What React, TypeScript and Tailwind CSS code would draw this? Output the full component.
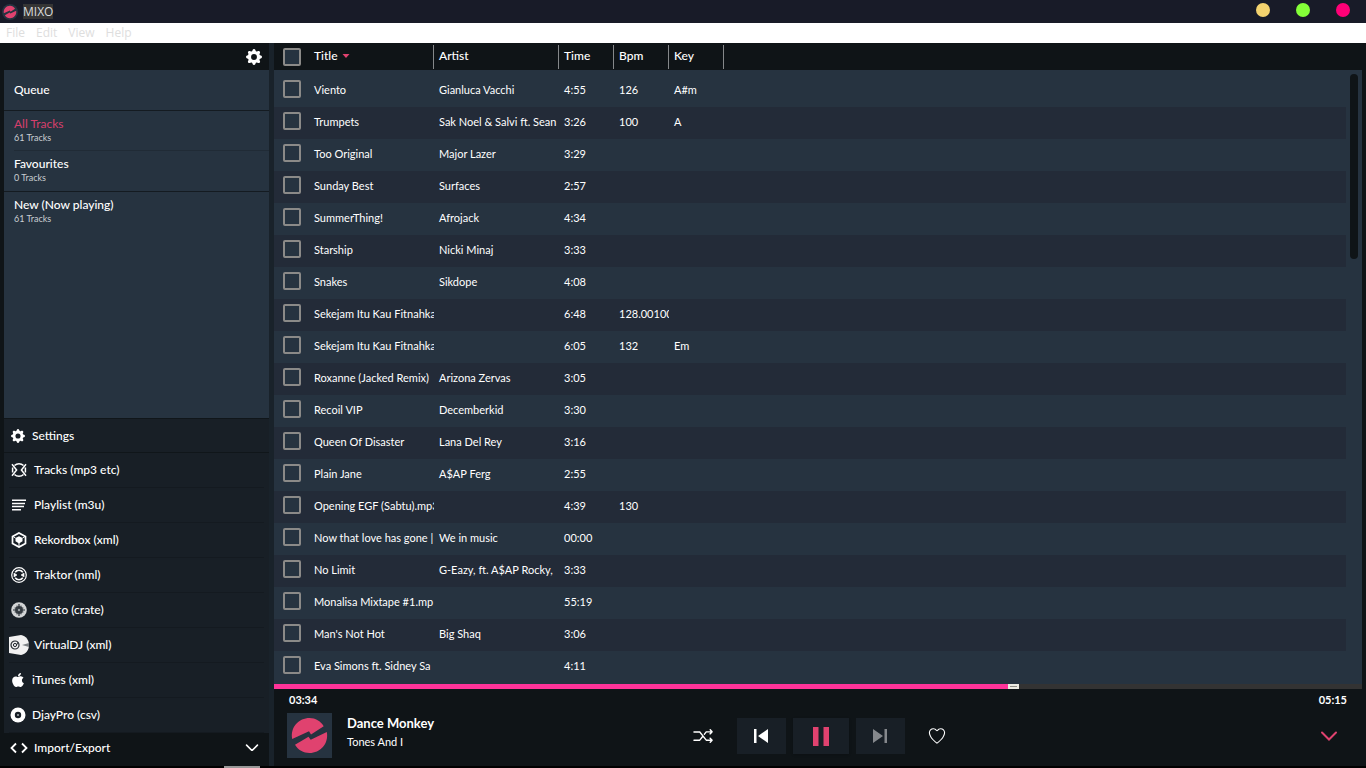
import * as React from "react";
import { BsGearFill } from "react-icons/bs";
import { FaApple } from "react-icons/fa";
import { IoIosHeartEmpty, IoIosShuffle } from "react-icons/io";

type Track = {
  title: string;
  artist?: string;
  time: string;
  bpm?: string;
  musicalKey?: string;
};

const tracks: Track[] = [
  { title: "Viento", artist: "Gianluca Vacchi", time: "4:55", bpm: "126", musicalKey: "A#m" },
  { title: "Trumpets", artist: "Sak Noel & Salvi ft. Sean", time: "3:26", bpm: "100", musicalKey: "A" },
  { title: "Too Original", artist: "Major Lazer", time: "3:29" },
  { title: "Sunday Best", artist: "Surfaces", time: "2:57" },
  { title: "SummerThing!", artist: "Afrojack", time: "4:34" },
  { title: "Starship", artist: "Nicki Minaj", time: "3:33" },
  { title: "Snakes", artist: "Sikdope", time: "4:08" },
  { title: "Sekejam Itu Kau Fitnahka", time: "6:48", bpm: "128.00100" },
  { title: "Sekejam Itu Kau Fitnahka", time: "6:05", bpm: "132", musicalKey: "Em" },
  { title: "Roxanne (Jacked Remix)", artist: "Arizona Zervas", time: "3:05" },
  { title: "Recoil VIP", artist: "Decemberkid", time: "3:30" },
  { title: "Queen Of Disaster", artist: "Lana Del Rey", time: "3:16" },
  { title: "Plain Jane", artist: "A$AP Ferg", time: "2:55" },
  { title: "Opening EGF (Sabtu).mp3", time: "4:39", bpm: "130" },
  { title: "Now that love has gone |", artist: "We in music", time: "00:00" },
  { title: "No Limit", artist: "G-Eazy, ft. A$AP Rocky,", time: "3:33" },
  { title: "Monalisa Mixtape #1.mp", time: "55:19" },
  { title: "Man's Not Hot", artist: "Big Shaq", time: "3:06" },
  { title: "Eva Simons ft. Sidney Sa", time: "4:11" },
];

const checkboxClass =
  "block size-[18px] appearance-none rounded-[2px] border-2 border-[#8b8a88] bg-[#263340] checked:bg-[#e0426f]";

function Logo({ className }: { className?: string }) {
  return (
    <svg viewBox="0 0 45 45" className={className} aria-hidden="true">
      <path d="M5.200 26C3 14 12 5 22.500 5c6 0 11 3 14.200 8.200L24 21.500l-2-3.200z" fill="#e0426f" />
      <path d="M39.800 19C42 31 33 40 22.500 40c-6 0-11.500-3-14.500-8.200L21.500 23.800l2.200 3z" fill="#e0426f" />
    </svg>
  );
}

function TracksIcon() {
  return (
    <svg viewBox="0 0 16 16" className="size-4" fill="none" stroke="#fff" strokeWidth="1.500">
      <path d="M3.500 3.600a6.300 6.300 0 0 1 9 0M3.500 12.400a6.300 6.300 0 0 0 9 0" />
      <path d="M1.600 5.500v5M14.400 5.500v5" />
      <path d="M1 2.200 5.600 8 1 13.800M15 2.200 10.400 8l4.600 5.800" />
    </svg>
  );
}

function PlaylistIcon() {
  return (
    <svg viewBox="0 0 16 16" className="size-4" stroke="#fff" strokeWidth="1.500">
      <path d="M1 3.200h14M1 6.400h13M1 9.600h12M1 12.800h9" />
    </svg>
  );
}

function RekordboxIcon() {
  return (
    <svg viewBox="0 0 16 16" className="size-4">
      <path d="M8 .9l6.500 3.600v7L8 15.100l-6.500-3.600v-7z" fill="none" stroke="#fff" strokeWidth="1.700" />
      <path d="M8 4.200 11.500 6v3.300L8 11.500 4.500 9.300V6z" fill="#fff" />
      <path d="M8 11v4M4.500 6 2 4.500M11.500 6 14 4.500" stroke="#fff" />
    </svg>
  );
}

function TraktorIcon() {
  return (
    <svg viewBox="0 0 16 16" className="size-4" fill="none" stroke="#fff">
      <circle cx="8" cy="8" r="7.300" strokeWidth="1.200" />
      <path d="M4.200 5.200a4.700 4.700 0 0 1 7.600 0M4.200 10.800a4.700 4.700 0 0 0 7.600 0" strokeWidth="1.600" />
      <path d="M3 6l3 2-3 2zM13 6l-3 2 3 2z" fill="#fff" strokeWidth=".6" />
    </svg>
  );
}

function SeratoIcon() {
  return (
    <svg viewBox="0 0 16 16" className="size-4">
      <circle cx="8" cy="8" r="7.800" fill="#d3d5d6" />
      <circle cx="8" cy="8" r="4" fill="#50575c" />
      <path d="M8 2v12M2 8h12" stroke="#252c32" strokeWidth="1.200" />
      <path d="M6 3.500v9M10 3.500v9M3.500 6h9M3.500 10h9" stroke="#252c32" strokeWidth=".7" />
      <circle cx="8" cy="8" r="1.200" fill="#9aa0a4" />
    </svg>
  );
}

function VirtualDjIcon() {
  return (
    <svg viewBox="0 0 20 20" className="size-5">
      <path d="M0 2 12 0c5 1 8 5 8 10s-3 9-8 10L0 18z" fill="#f1f1f1" />
      <circle cx="6" cy="10" r="4" fill="none" stroke="#22292f" strokeWidth="1.200" />
      <circle cx="6" cy="10" r="1.600" fill="none" stroke="#22292f" />
      <path d="M7.600 10 9 7" stroke="#22292f" />
      <path d="M13 10l7-2v4z" fill="#7b8084" />
    </svg>
  );
}

function DjayIcon() {
  return (
    <svg viewBox="0 0 16 16" className="size-4">
      <circle cx="8" cy="8" r="7.500" fill="#fff" />
      <circle cx="8" cy="8" r="3.200" fill="#181f26" />
      <circle cx="8" cy="8" r="1.100" fill="#9fa5a9" />
    </svg>
  );
}

function Chevron({ className }: { className?: string }) {
  return (
    <svg viewBox="0 0 18 10" className={className} fill="none" stroke="currentColor" strokeWidth="2" strokeLinecap="round">
      <path d="M2 1.500l7 7 7-7" />
    </svg>
  );
}

const sources = [
  { label: "Tracks (mp3 etc)", icon: <TracksIcon /> },
  { label: "Playlist (m3u)", icon: <PlaylistIcon /> },
  { label: "Rekordbox (xml)", icon: <RekordboxIcon /> },
  { label: "Traktor (nml)", icon: <TraktorIcon /> },
  { label: "Serato (crate)", icon: <SeratoIcon /> },
  { label: "VirtualDJ (xml)", icon: <VirtualDjIcon /> },
  { label: "iTunes (xml)", icon: <FaApple className="size-4" />, narrow: true },
  { label: "DjayPro (csv)", icon: <DjayIcon />, narrow: true },
];

function TitleBar() {
  return (
    <header className="flex h-[23px] shrink-0 items-center bg-[#181b28] pr-4 pl-0.5 font-['Open_Sans',sans-serif] text-xs">
      <span className="size-4 overflow-hidden rounded-full bg-[#263340]">
        <Logo className="size-4" />
      </span>
      <h1 className="ml-[5px] bg-[#353535] leading-[15px] text-[#dcdcdc]">MIXO</h1>
      <div className="ml-auto flex h-full items-start gap-[26px] pt-[3px]">
        <button aria-label="Minimize" className="size-3.5 rounded-full bg-[#f3d36f]" />
        <button aria-label="Maximize" className="size-3.5 rounded-full bg-[#84ff38]" />
        <button aria-label="Close" className="size-3.5 rounded-full bg-[#ff0077]" />
      </div>
    </header>
  );
}

function MenuBar() {
  return (
    <nav className="flex h-5 shrink-0 items-center gap-[11px] bg-white px-1.5 font-['Open_Sans',sans-serif] text-xs text-[#dedede]">
      <button>File</button>
      <button>Edit</button>
      <button>View</button>
      <button>Help</button>
    </nav>
  );
}

function PlaylistItem({ name, count, active }: { name: string; count: string; active?: boolean }) {
  return (
    <button className="block h-10 w-full pb-0.5 text-left">
      <span className={active ? "block leading-4 text-[#d63f6c]" : "block leading-4 font-medium"}>{name}</span>
      <span className="block text-[9px] leading-3 text-[#c9ced2]">{count}</span>
    </button>
  );
}

function Sidebar() {
  return (
    <aside className="flex w-[274px] shrink-0 flex-col border-r-[5px] border-[#19222a] pl-1 text-xs">
      <div className="flex h-[27px] shrink-0 items-center justify-end pr-[7px]">
        <button aria-label="Playlist settings">
          <BsGearFill className="size-4" />
        </button>
      </div>
      <div className="min-h-0 flex-1 overflow-hidden bg-[#263340]">
        <div className="border-b border-[#141b21] pl-2.5">
          <button className="block h-10 w-full text-left font-medium">Queue</button>
        </div>
        <div className="border-b border-[#141b21] pl-2.5">
          <div className="h-10 border-b border-[#202b36]">
            <PlaylistItem name="All Tracks" count="61 Tracks" active />
          </div>
          <PlaylistItem name="Favourites" count="0 Tracks" />
        </div>
        <div className="pl-2.5">
          <PlaylistItem name="New (Now playing)" count="61 Tracks" />
        </div>
      </div>
      <nav className="shrink-0 border-t border-[#10161a] bg-[#181f26] font-medium">
        <button className="flex h-[34px] w-full items-center gap-[7px] border-b border-[#10161a] pl-[7px]">
          <BsGearFill className="size-3.5" />
          Settings
        </button>
        <ul className="px-[5px]">
          {sources.map((source) => (
            <li key={source.label} className="border-b border-[#141a20]">
              <button className="flex h-[34px] w-full items-center gap-[5px]">
                <span className={source.narrow ? "flex w-[18px] justify-center" : "flex w-5 justify-center"}>
                  {source.icon}
                </span>
                {source.label}
              </button>
            </li>
          ))}
        </ul>
      </nav>
      <button className="flex h-[33px] shrink-0 items-center bg-[#0f1417] pr-2.5 pb-1 pl-1.5 font-medium">
        <svg viewBox="0 0 18 12" className="w-[18px]" fill="none" stroke="#fff" strokeWidth="1.800">
          <path d="M6 1.500 1.500 6 6 10.500M12 1.500 16.500 6 12 10.500" />
        </svg>
        <span className="ml-1.5">Import/Export</span>
        <Chevron className="ml-auto w-3.5" />
      </button>
    </aside>
  );
}

const headClass = "p-0 text-left font-medium";
const headInner = "flex h-6 items-center border-r border-[#85888a] pb-0.5 pl-[5px]";
const cellClass = "overflow-hidden p-0 pb-0.5 pl-[5px] whitespace-nowrap";

function Columns() {
  return (
    <colgroup>
      <col className="w-[35px]" />
      <col className="w-[125px]" />
      <col className="w-[125px]" />
      <col className="w-[55px]" />
      <col className="w-[55px]" />
      <col className="w-[55px]" />
      <col />
    </colgroup>
  );
}

function TrackList() {
  return (
    <div className="relative flex min-h-0 flex-1 flex-col overflow-hidden bg-[#263340]">
      <div className="bg-[#0f1417]">
        <table className="w-full table-fixed border-collapse text-xs">
          <Columns />
          <thead>
            <tr className="h-[27px]">
              <th className="p-0 pl-[9px]">
                <input type="checkbox" aria-label="Select all tracks" className={checkboxClass} />
              </th>
              <th className={headClass}>
                <div className={headInner}>
                  Title
                  <svg viewBox="0 0 8 4" className="ml-1 w-2" fill="#e0426f">
                    <path d="M.5 0h7L4 4z" />
                  </svg>
                </div>
              </th>
              <th className={headClass}><div className={headInner}>Artist</div></th>
              <th className={headClass}><div className={headInner}>Time</div></th>
              <th className={headClass}><div className={headInner}>Bpm</div></th>
              <th className={headClass}><div className={headInner}>Key</div></th>
              <th />
            </tr>
          </thead>
        </table>
      </div>
      <div className="min-h-0 flex-1 overflow-hidden pt-[5px] pr-4">
        <table className="w-full table-fixed border-collapse text-[11px]">
          <Columns />
          <tbody>
            {tracks.map((track, i) => (
              <tr key={i} className="h-8 even:bg-[#232b38]">
                <td className="p-0 pb-1 pl-[9px]">
                  <input type="checkbox" aria-label={`Select ${track.title}`} className={checkboxClass} />
                </td>
                <td className={cellClass}>{track.title}</td>
                <td className={cellClass}>{track.artist}</td>
                <td className={cellClass}>{track.time}</td>
                <td className={cellClass}>{track.bpm}</td>
                <td className={cellClass}>{track.musicalKey}</td>
                <td />
              </tr>
            ))}
          </tbody>
        </table>
      </div>
      <div className="absolute top-[31px] right-1 h-[185px] w-2 rounded-full bg-[#0f1417]" />
    </div>
  );
}

const duration = 315;

function Player() {
  const [position, setPosition] = React.useState(214.7);
  const [playing, setPlaying] = React.useState(true);
  const percent = (position / duration) * 100;

  return (
    <footer className="shrink-0">
      <input
        type="range"
        aria-label="Seek"
        min={0}
        max={duration}
        step={0.1}
        value={position}
        onChange={(e) => setPosition(Number(e.target.value))}
        style={{ background: `linear-gradient(to right, #ff3399 ${percent}%, #333333 ${percent}%)` }}
        className="block h-[5px] w-full appearance-none [&::-webkit-slider-thumb]:h-[5px] [&::-webkit-slider-thumb]:w-[11px] [&::-webkit-slider-thumb]:appearance-none [&::-webkit-slider-thumb]:border-2 [&::-webkit-slider-thumb]:border-[#eceae2] [&::-webkit-slider-thumb]:bg-[#8f8d85]"
      />
      <div className="flex h-[22px] items-center justify-between px-[15px] text-[11px] font-bold">
        <span>03:34</span>
        <span>05:15</span>
      </div>
      <div className="grid h-[55px] grid-cols-[1fr_auto_1fr] items-start px-[13px]">
        <div className="flex gap-[15px] pt-0.5">
          <Logo className="size-[45px] bg-[#263340]" />
          <div>
            <h2 className="text-[13px] leading-5 font-bold">Dance Monkey</h2>
            <p className="text-[11px] leading-[18px]">Tones And I</p>
          </div>
        </div>
        <div className="flex items-center pt-[7px]">
          <button aria-label="Shuffle" className="mr-[21px]">
            <IoIosShuffle className="size-[26px]" />
          </button>
          <button aria-label="Previous" className="flex h-9 w-[49px] items-center justify-center bg-[#181f26]">
            <svg viewBox="0 0 14 14" className="size-3.5" fill="#fff">
              <path d="M0 0h2.500v14H0zM14 0v14L4 7z" />
            </svg>
          </button>
          <button
            aria-label={playing ? "Pause" : "Play"}
            onClick={() => setPlaying(!playing)}
            className="mx-[7px] flex h-9 w-14 items-center justify-center bg-[#181f26] shadow"
          >
            <svg viewBox="0 0 16 19" className="w-4" fill="#e0426f">
              {playing ? <path d="M0 0h5.500v19H0zM10.500 0H16v19h-5.500z" /> : <path d="M0 0v19l16-9.500z" />}
            </svg>
          </button>
          <button aria-label="Next" className="flex h-9 w-[49px] items-center justify-center bg-[#181f26]">
            <svg viewBox="0 0 14 14" className="size-3.5" fill="#85888c">
              <path d="M11.500 0H14v14h-2.500zM0 0v14l10-7z" />
            </svg>
          </button>
          <button aria-label="Favourite" className="ml-[22px]">
            <IoIosHeartEmpty className="size-5" />
          </button>
        </div>
        <button aria-label="Collapse player" className="mt-5 mr-[11px] justify-self-end text-[#e0426f]">
          <Chevron className="w-[18px]" />
        </button>
      </div>
    </footer>
  );
}

export default function App() {
  return (
    <div className="flex h-screen flex-col overflow-hidden bg-[#0f1417] font-[Lato,sans-serif] text-white">
      <TitleBar />
      <MenuBar />
      <div className="flex min-h-0 flex-1">
        <Sidebar />
        <main className="mr-1 flex min-w-0 flex-1 flex-col">
          <TrackList />
          <Player />
        </main>
      </div>
      <div className="h-0.5 shrink-0 bg-black pl-56">
        <div className="h-full w-9 bg-[#999]" />
      </div>
    </div>
  );
}
